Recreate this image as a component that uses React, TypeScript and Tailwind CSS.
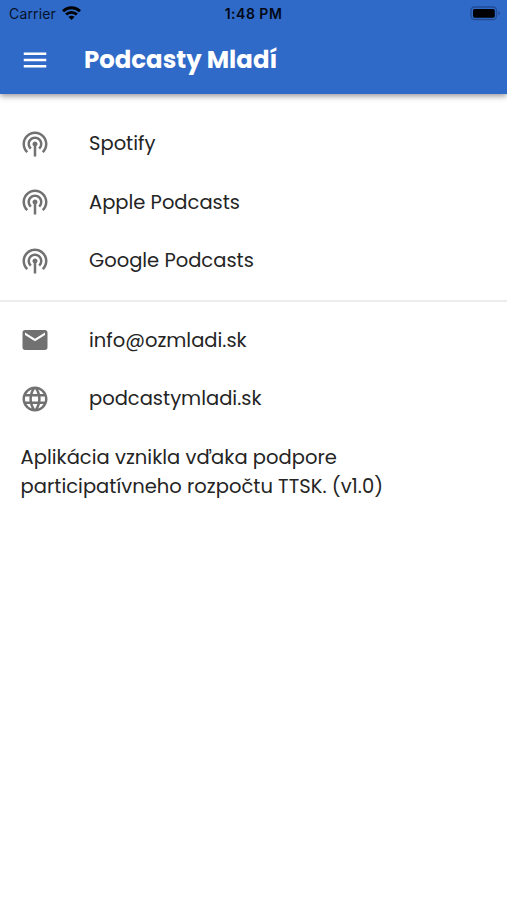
import type { ReactNode } from "react";
import { MdEmail, MdLanguage, MdMenu, MdPodcasts } from "react-icons/md";

function Row({ icon, children }: { icon: ReactNode; children: ReactNode }) {
  return (
    <li className="flex h-[58.7px] items-center pl-5">
      <span className="w-[69px] text-[30px] text-[#717171]">{icon}</span>
      {children}
    </li>
  );
}

function StatusBar() {
  return (
    <div className="flex h-[27px] items-center justify-between pl-[9px] pr-[6px] font-['Inter',sans-serif] text-[14px] text-[#06122b]">
      <div className="flex w-[120px] items-center gap-[6px]">
        <span className="w-[47px] whitespace-nowrap tracking-[0.15px]">Carrier</span>
        <svg className="-mt-px" width="19" height="14" viewBox="0 0 19 14" fill="none" stroke="#000" strokeWidth="2.9">
          <path d="M1 5.2C5.7.6 13.3.6 18 5.2" />
          <path d="M4.1 8.5c3-2.9 7.8-2.9 10.8 0" />
          <path d="M9.5 13.9 6.5 11c1.6-1.6 4.4-1.6 6 0z" fill="#000" stroke="none" />
        </svg>
      </div>
      <span className="mr-[3px] whitespace-nowrap font-semibold tracking-[0.5px] text-[#020815]">1:48 PM</span>
      <div className="flex w-[120px] justify-end">
        <svg width="31" height="15" viewBox="0 0 31 15">
          <rect x="1" y="1" width="25.5" height="12.5" rx="3.5" fill="none" stroke="#234c94" strokeWidth="1.3" />
          <rect x="3" y="3" width="21.8" height="8.7" rx="1.6" fill="#000" />
          <path d="M28.4 5v4.5c2-.8 2-3.7 0-4.5z" fill="#234c94" />
        </svg>
      </div>
    </div>
  );
}

export default function App() {
  return (
    <div className="h-[900px] w-full overflow-hidden bg-white font-['Poppins','Inter',sans-serif] text-[19.5px] text-[#242424]">
      <header className="h-[94px] bg-[#306ac8] shadow-[0_2px_6px_rgba(0,0,0,0.42)]">
        <StatusBar />
        <div className="flex h-[66px] items-center pl-5 text-white">
          <MdMenu className="mr-[34px] text-[30px]" />
          <h1 className="whitespace-nowrap text-[24.4px] font-bold">Podcasty Mladí</h1>
        </div>
      </header>
      <ul className="pt-[20.4px]">
        <Row icon={<MdPodcasts />}><span>Spotify</span></Row>
        <Row icon={<MdPodcasts />}><span>Apple Podcasts</span></Row>
        <Row icon={<MdPodcasts />}><span>Google Podcasts</span></Row>
      </ul>
      <hr className="mt-[9.5px] border-t-2 border-[#ececec]" />
      <ul className="pt-[9.1px]">
        <Row icon={<MdEmail />}><span>info@ozmladi.sk</span></Row>
        <Row icon={<MdLanguage />}><span>podcastymladi.sk</span></Row>
      </ul>
      <p className="mt-[14.6px] whitespace-nowrap pl-[20.6px] leading-[29.3px] tracking-[0.02px]">
        <span className="block">Aplikácia vznikla vďaka podpore</span>
        <span className="block">participatívneho rozpočtu TTSK. (v1.0)</span>
      </p>
    </div>
  );
}
